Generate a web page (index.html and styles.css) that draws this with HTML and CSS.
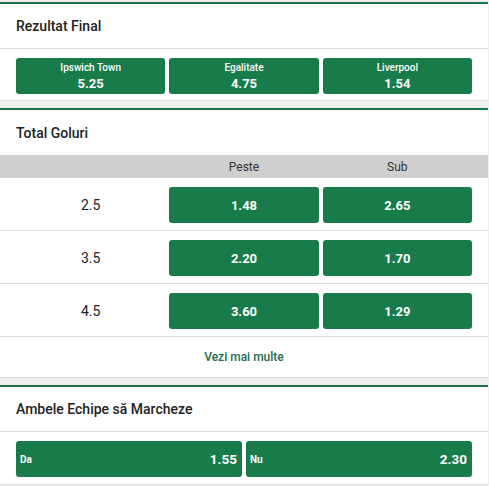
FILE: index.html
```html
<!DOCTYPE html>
<html lang="ro">
<head>
<meta charset="utf-8">
<link rel="stylesheet" href="styles.css">
</head>
<body>
<div class="page">
  <section class="market">
    <div class="market-head">Rezultat Final</div>
    <div class="odds-row three">
      <button class="odd stacked"><span class="lbl">Ipswich Town</span><span class="val">5.25</span></button>
      <button class="odd stacked"><span class="lbl">Egalitate</span><span class="val">4.75</span></button>
      <button class="odd stacked"><span class="lbl">Liverpool</span><span class="val">1.54</span></button>
    </div>
  </section>

  <section class="market">
    <div class="market-head flat">Total Goluri</div>
    <div class="grid-head">
      <span></span><span>Peste</span><span>Sub</span>
    </div>
    <div class="grid-row">
      <span class="line">2.5</span>
      <button class="odd"><span class="val">1.48</span></button>
      <button class="odd"><span class="val">2.65</span></button>
    </div>
    <div class="grid-row">
      <span class="line">3.5</span>
      <button class="odd"><span class="val">2.20</span></button>
      <button class="odd"><span class="val">1.70</span></button>
    </div>
    <div class="grid-row">
      <span class="line">4.5</span>
      <button class="odd"><span class="val">3.60</span></button>
      <button class="odd"><span class="val">1.29</span></button>
    </div>
    <div class="more">Vezi mai multe</div>
  </section>

  <section class="market">
    <div class="market-head">Ambele Echipe să Marcheze</div>
    <div class="odds-row two">
      <button class="odd inline"><span class="lbl">Da</span><span class="val">1.55</span></button>
      <button class="odd inline"><span class="lbl">Nu</span><span class="val">2.30</span></button>
    </div>
  </section>
</div>
</body>
</html>
```

FILE: styles.css
```css
html, body {
  margin: 0;
  padding: 0;
  background: #efefef;
}
body {
  font-family: Roboto, "Liberation Sans", Arial, sans-serif;
  color: #222;
}
.page {
  width: 488px;
  padding-top: 2px;
  display: flex;
  flex-direction: column;
  gap: 7px;
}
.market {
  background: #fff;
  border-top: 2px solid #1c7046;
  border-bottom: 1px solid #dcdcdc;
}
.market-head {
  display: flex;
  align-items: center;
  padding: 0 16px;
  font-size: 14px;
  font-weight: 500;
  color: #222;
  border-bottom: 1px solid #dcdcdc;
  box-sizing: border-box;
  height: 45px;
}
.market-head.flat {
  border-bottom: none;
  height: 45px;
}
.odds-row {
  display: grid;
  gap: 4px;
  padding: 9px 16px 6px;
}
.odds-row.three { grid-template-columns: 1fr 1fr 1fr; }
.odds-row.two { grid-template-columns: 1fr 1fr; padding: 9px 16px 7px; }
.odd {
  border: none;
  margin: 0;
  background: #177b4a;
  color: #fff;
  border-radius: 3px;
  height: 36px;
  font-family: inherit;
  display: flex;
  align-items: center;
  justify-content: center;
  padding: 0 6px;
  cursor: pointer;
}
.odd .val {
  font-size: 13px;
  font-weight: 700;
}
.odd .lbl {
  font-size: 10px;
  font-weight: 500;
}
.odd.stacked {
  flex-direction: column;
  gap: 2px;
}
.odd.stacked .val { line-height: 15px; }
.odd.stacked .lbl { line-height: 12px; }
.odd.inline {
  justify-content: space-between;
  padding: 0 5px 0 4px;
}
.odd.inline .lbl { font-weight: 700; }
.odd.inline .val { font-size: 13.5px; }
.grid-head {
  display: grid;
  grid-template-columns: 1fr 1fr 1fr;
  gap: 4px;
  padding: 0 16px;
  height: 23px;
  align-items: center;
  background: #cfcfcf;
  font-size: 12px;
  color: #333;
  text-align: center;
}
.grid-row {
  display: grid;
  grid-template-columns: 1fr 1fr 1fr;
  gap: 4px;
  padding: 9px 16px 7px;
  align-items: center;
  border-bottom: 1px solid #dcdcdc;
}
.grid-row .line {
  text-align: center;
  font-size: 14px;
  color: #222;
}
.more {
  height: 40px;
  display: flex;
  align-items: center;
  justify-content: center;
  font-size: 12px;
  font-weight: 500;
  color: #1e6b52;
}
```
